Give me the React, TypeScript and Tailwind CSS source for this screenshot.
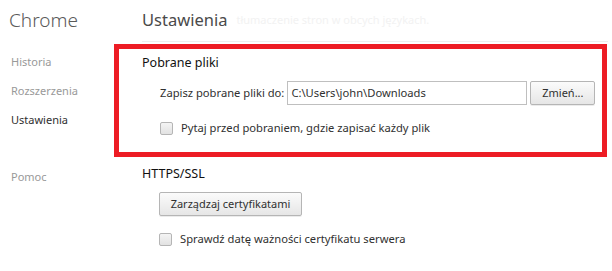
export default function App() {
  const font = "font-['Noto_Sans','Open_Sans',sans-serif]";
  return (
    <div className={`relative flex h-[271px] w-[612px] overflow-hidden bg-white text-[#303030] ${font}`}>
      <div className="flex w-[142px] shrink-0 flex-col pl-[9px]">
        <div className="flex h-[41px] items-center text-[19px] font-light text-[#5a5a5a]">Chrome</div>
        <div className="mt-[7px] flex h-[29px] items-center pl-[2px] text-[11px] text-[#999]">Historia</div>
        <div className="flex h-[29px] items-center pl-[2px] text-[11px] text-[#999]">Rozszerzenia</div>
        <div className="flex h-[29px] items-center pl-[2px] text-[11px] text-[#303030]">Ustawienia</div>
        <div className="mt-[28px] flex h-[29px] items-center pl-[2px] text-[11px] text-[#999]">Pomoc</div>
      </div>
      <div className="flex flex-1 flex-col">
        <div className="mr-[4px] flex h-[42px] items-center gap-[9px] border-b border-[#eeeeee]">
          <span className="text-[16.5px] text-[#4a4a4a]">Ustawienia</span>
          <span className="text-[11px] text-[#f2f2f2]">tłumaczenie stron w obcych językach.</span>
        </div>
        <div className="mt-[11px] flex h-[20px] items-center text-[12.5px] text-[#111]">Pobrane pliki</div>
        <div className="mt-[8px] flex items-center pl-[18px] text-[11.2px]">
          <span>Zapisz pobrane pliki do:</span>
          <div className="ml-[3px] flex h-[24px] w-[240px] items-center border border-[#bfbfbf] px-[3px]">C:\Users\john\Downloads</div>
          <button className="ml-[3px] flex h-[24px] w-[65px] items-center justify-center rounded-[2px] border border-[#b5b5b5] bg-gradient-to-b from-[#fbfbfb] to-[#e6e6e6] text-[11px] shadow-[0_1px_0_rgba(0,0,0,0.08)]">Zmień...</button>
        </div>
        <div className="mt-[15px] flex h-[16px] items-center gap-[8px] pl-[18px] text-[11.2px]">
          <span className="h-[13px] w-[13px] rounded-[2px] border border-[#b5b5b5] bg-gradient-to-b from-[#f4f4f4] to-[#e2e2e2]" />
          <span>Pytaj przed pobraniem, gdzie zapisać każdy plik</span>
        </div>
        <div className="mt-[28px] flex h-[20px] items-center text-[12.5px] text-[#111]">HTTPS/SSL</div>
        <div className="mt-[8px] pl-[17px]">
          <button className="flex h-[24px] w-[143px] items-center justify-center rounded-[2px] border border-[#b5b5b5] bg-gradient-to-b from-[#fbfbfb] to-[#e6e6e6] text-[11px] shadow-[0_1px_0_rgba(0,0,0,0.08)]">Zarządzaj certyfikatami</button>
        </div>
        <div className="mt-[15px] flex h-[16px] items-center gap-[8px] pl-[17px] text-[11.2px]">
          <span className="h-[13px] w-[13px] rounded-[2px] border border-[#b5b5b5] bg-gradient-to-b from-[#f4f4f4] to-[#e2e2e2]" />
          <span>Sprawdź datę ważności certyfikatu serwera</span>
        </div>
      </div>
      <div className="pointer-events-none absolute left-[114px] top-[44px] h-[113px] w-[493px] border-[5px] border-[#ed1c24]" />
    </div>
  );
}
